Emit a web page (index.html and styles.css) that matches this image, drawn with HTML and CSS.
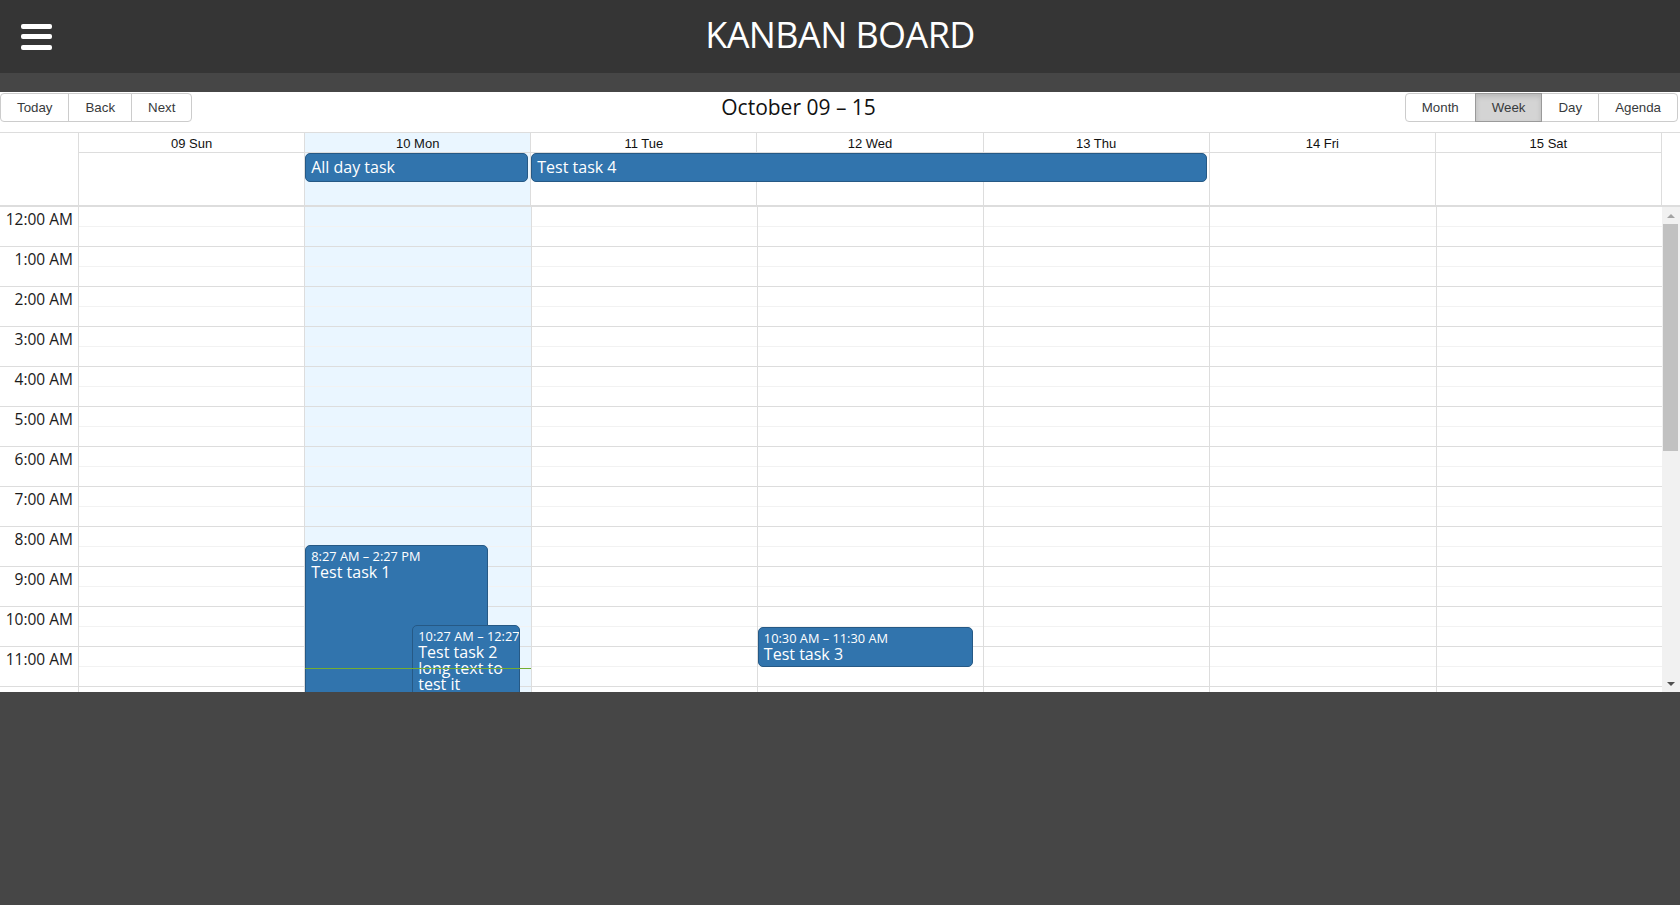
FILE: index.html
```html
<!DOCTYPE html>
<html lang="en">
<head>
<meta charset="utf-8">
<title>Kanban Board</title>
<link rel="stylesheet" href="styles.css">
</head>
<body>
<header class="topbar">
  <div class="burger" aria-label="Menu"><span></span><span></span><span></span></div>
  <h1 class="title">KANBAN BOARD</h1>
  <div></div>
</header>
<main class="page">
  <div class="cal">
    <div class="toolbar">
      <div class="btn-group">
        <button class="btn">Today</button><button class="btn">Back</button><button class="btn">Next</button>
      </div>
      <div class="tb-label">October 09 – 15</div>
      <div class="btn-group">
        <button class="btn">Month</button><button class="btn active">Week</button><button class="btn">Day</button><button class="btn">Agenda</button>
      </div>
    </div>
    <div class="timeview">
      <div class="thead">
        <div class="hgut"></div>
        <div class="hd">09 Sun</div>
        <div class="hd today">10 Mon</div>
        <div class="hd">11 Tue</div>
        <div class="hd">12 Wed</div>
        <div class="hd">13 Thu</div>
        <div class="hd">14 Fri</div>
        <div class="hd">15 Sat</div>
        <div class="ad c2"></div>
        <div class="ad c3 today"></div>
        <div class="ad c4"></div>
        <div class="ad c5"></div>
        <div class="ad c6"></div>
        <div class="ad c7"></div>
        <div class="ad c8"></div>
        <div class="ade" style="grid-column: 3 / 4">All day task</div>
        <div class="ade" style="grid-column: 4 / 7">Test task 4</div>
      </div>
      <div class="tcontent">
        <div class="tgrid">
          <div class="gutter">
            <div class="gg">12:00 AM</div><div class="gg">1:00 AM</div><div class="gg">2:00 AM</div><div class="gg">3:00 AM</div>
            <div class="gg">4:00 AM</div><div class="gg">5:00 AM</div><div class="gg">6:00 AM</div><div class="gg">7:00 AM</div>
            <div class="gg">8:00 AM</div><div class="gg">9:00 AM</div><div class="gg">10:00 AM</div><div class="gg">11:00 AM</div>
          </div>
          <div class="day">
            <div class="g"><i></i><i></i></div><div class="g"><i></i><i></i></div><div class="g"><i></i><i></i></div><div class="g"><i></i><i></i></div><div class="g"><i></i><i></i></div><div class="g"><i></i><i></i></div><div class="g"><i></i><i></i></div><div class="g"><i></i><i></i></div><div class="g"><i></i><i></i></div><div class="g"><i></i><i></i></div><div class="g"><i></i><i></i></div><div class="g"><i></i><i></i></div><div class="g"><i></i><i></i></div>
          </div>
          <div class="day today">
            <div class="g"><i></i><i></i></div><div class="g"><i></i><i></i></div><div class="g"><i></i><i></i></div><div class="g"><i></i><i></i></div><div class="g"><i></i><i></i></div><div class="g"><i></i><i></i></div><div class="g"><i></i><i></i></div><div class="g"><i></i><i></i></div><div class="g"><i></i><i></i></div><div class="g"><i></i><i></i></div><div class="g"><i></i><i></i></div><div class="g"><i></i><i></i></div><div class="g"><i></i><i></i></div>
            <div class="ev" style="top:338px;height:240px;left:0;width:81.2%">
              <div class="ev-label">8:27 AM – 2:27 PM</div>
              <div class="ev-title">Test task 1</div>
            </div>
            <div class="ev" style="top:418px;height:80px;left:47.5%;width:48%">
              <div class="ev-label">10:27 AM – 12:27 PM</div>
              <div class="ev-title">Test task 2 long text to test it</div>
            </div>
            <div class="now" style="top:461px"></div>
          </div>
          <div class="day">
            <div class="g"><i></i><i></i></div><div class="g"><i></i><i></i></div><div class="g"><i></i><i></i></div><div class="g"><i></i><i></i></div><div class="g"><i></i><i></i></div><div class="g"><i></i><i></i></div><div class="g"><i></i><i></i></div><div class="g"><i></i><i></i></div><div class="g"><i></i><i></i></div><div class="g"><i></i><i></i></div><div class="g"><i></i><i></i></div><div class="g"><i></i><i></i></div><div class="g"><i></i><i></i></div>
          </div>
          <div class="day">
            <div class="g"><i></i><i></i></div><div class="g"><i></i><i></i></div><div class="g"><i></i><i></i></div><div class="g"><i></i><i></i></div><div class="g"><i></i><i></i></div><div class="g"><i></i><i></i></div><div class="g"><i></i><i></i></div><div class="g"><i></i><i></i></div><div class="g"><i></i><i></i></div><div class="g"><i></i><i></i></div><div class="g"><i></i><i></i></div><div class="g"><i></i><i></i></div><div class="g"><i></i><i></i></div>
            <div class="ev" style="top:420px;height:40px;left:0;width:95.4%">
              <div class="ev-label">10:30 AM – 11:30 AM</div>
              <div class="ev-title">Test task 3</div>
            </div>
          </div>
          <div class="day">
            <div class="g"><i></i><i></i></div><div class="g"><i></i><i></i></div><div class="g"><i></i><i></i></div><div class="g"><i></i><i></i></div><div class="g"><i></i><i></i></div><div class="g"><i></i><i></i></div><div class="g"><i></i><i></i></div><div class="g"><i></i><i></i></div><div class="g"><i></i><i></i></div><div class="g"><i></i><i></i></div><div class="g"><i></i><i></i></div><div class="g"><i></i><i></i></div><div class="g"><i></i><i></i></div>
          </div>
          <div class="day">
            <div class="g"><i></i><i></i></div><div class="g"><i></i><i></i></div><div class="g"><i></i><i></i></div><div class="g"><i></i><i></i></div><div class="g"><i></i><i></i></div><div class="g"><i></i><i></i></div><div class="g"><i></i><i></i></div><div class="g"><i></i><i></i></div><div class="g"><i></i><i></i></div><div class="g"><i></i><i></i></div><div class="g"><i></i><i></i></div><div class="g"><i></i><i></i></div><div class="g"><i></i><i></i></div>
          </div>
          <div class="day">
            <div class="g"><i></i><i></i></div><div class="g"><i></i><i></i></div><div class="g"><i></i><i></i></div><div class="g"><i></i><i></i></div><div class="g"><i></i><i></i></div><div class="g"><i></i><i></i></div><div class="g"><i></i><i></i></div><div class="g"><i></i><i></i></div><div class="g"><i></i><i></i></div><div class="g"><i></i><i></i></div><div class="g"><i></i><i></i></div><div class="g"><i></i><i></i></div><div class="g"><i></i><i></i></div>
          </div>
        </div>
        <div class="sbar">
          <div class="sarrow"><span class="tri up"></span></div>
          <div class="sthumb"></div>
          <div class="sfill"></div>
          <div class="sarrow"><span class="tri down"></span></div>
        </div>
      </div>
    </div>
  </div>
</main>
</body>
</html>
```
FILE: styles.css
```css
* { box-sizing: border-box; }
html, body { margin: 0; padding: 0; }
body {
  background: #464646;
  font-family: "Open Sans", "Noto Sans", sans-serif;
  width: 1680px;
  height: 905px;
  overflow: hidden;
}

/* top bar */
.topbar {
  height: 73px;
  background: #353535;
  display: grid;
  grid-template-columns: 1fr auto 1fr;
  align-items: center;
  padding: 0 21px;
}
.burger {
  justify-self: start;
  display: flex;
  flex-direction: column;
  gap: 5.5px;
}
.burger span {
  display: block;
  width: 31px;
  height: 5px;
  background: #fff;
  border-radius: 2px;
}
.title {
  margin: 0 0 3px;
  color: #fff;
  font-size: 36px;
  font-weight: 400;
  letter-spacing: -0.6px;
  line-height: 1;
}

.page { padding-top: 19px; }

/* calendar */
.cal {
  background: #fff;
  height: 600px;
  display: flex;
  flex-direction: column;
}
.toolbar {
  display: flex;
  align-items: center;
  justify-content: space-between;
  margin: 1px 2px 10px 0;
}
.btn-group { display: flex; }
.btn {
  font-family: "Liberation Sans", Arial, sans-serif;
  font-size: 13.3px;
  line-height: 15px;
  color: #373a3c;
  background: #fff;
  border: 1px solid #ccc;
  padding: 6px 16px;
  margin: 0;
  border-radius: 0;
  cursor: pointer;
}
.btn + .btn { margin-left: -1px; }
.btn:first-child { border-radius: 4px 0 0 4px; }
.btn:last-child { border-radius: 0 4px 4px 0; }
.btn.active {
  background: #d4d4d4;
  border-color: #9a9a9a;
  box-shadow: inset 0 3px 5px rgba(0, 0, 0, 0.125);
  position: relative;
}
.tb-label {
  flex: 1;
  text-align: center;
  font-size: 21px;
  line-height: 27px;
  color: #111;
}

.timeview {
  flex: 1;
  min-height: 0;
  display: flex;
  flex-direction: column;
  border-top: 1px solid #ddd;
}
.thead {
  display: grid;
  grid-template-columns: 78px repeat(7, 1fr);
  grid-template-rows: 20px 52px;
  width: calc(100% - 18px);
  border-right: 1px solid #ddd;
}
.hgut { grid-row: 1 / 3; grid-column: 1; }
.hd {
  grid-row: 1;
  border-left: 1px solid #ddd;
  border-bottom: 1px solid #ddd;
  text-align: center;
  font-family: "Liberation Sans", Arial, sans-serif;
  font-size: 13px;
  line-height: 19px;
  padding-top: 1px;
  color: #111;
  white-space: nowrap;
  overflow: hidden;
}
.ad { grid-row: 2; border-left: 1px solid #ddd; }
.ad.c2 { grid-column: 2; }
.ad.c3 { grid-column: 3; }
.ad.c4 { grid-column: 4; }
.ad.c5 { grid-column: 5; }
.ad.c6 { grid-column: 6; }
.ad.c7 { grid-column: 7; }
.ad.c8 { grid-column: 8; }
.today { background: #eaf6ff; }
.ade {
  grid-row: 2;
  align-self: start;
  margin: 0 2px 0 1px;
  background: #3174ad;
  border: 1px solid #265985;
  border-radius: 5px;
  color: #fff;
  font-size: 16px;
  line-height: 23px;
  padding: 2px 5px;
  white-space: nowrap;
  overflow: hidden;
  position: relative;
  z-index: 1;
}

.tcontent {
  flex: 1;
  min-height: 0;
  display: flex;
  border-top: 2px solid #ddd;
  overflow: hidden;
}
.tgrid {
  flex: 1;
  display: grid;
  grid-template-columns: 78px repeat(7, 1fr);
  align-items: start;
  overflow: hidden;
}
.gutter, .day { display: flex; flex-direction: column; }
.gg {
  height: 40px;
  border-bottom: 1px solid #ddd;
  padding: 0 5px;
  text-align: right;
  font-size: 15.5px;
  line-height: 24px;
  color: #1a1a1a;
  white-space: nowrap;
}
.day {
  position: relative;
  border-left: 1px solid #ddd;
}
.g {
  height: 40px;
  border-bottom: 1px solid #ddd;
  display: flex;
  flex-direction: column;
}
.g i { flex: 1; display: block; }
.g i + i { border-top: 1px solid #f2f2f2; }

.ev {
  position: absolute;
  background: #3174ad;
  border: 1px solid #265985;
  border-radius: 5px;
  color: #fff;
  padding: 3px 5px 2px;
  overflow: hidden;
  z-index: 2;
}
.ev-label {
  font-size: 12.8px;
  line-height: 15px;
  white-space: nowrap;
}
.ev-title {
  font-size: 16px;
  line-height: 16px;
}
.now {
  position: absolute;
  left: 0;
  right: 0;
  height: 1px;
  background: #74ad31;
  z-index: 3;
}

/* scrollbar */
.sbar {
  width: 18px;
  background: #f1f1f1;
  display: flex;
  flex-direction: column;
}
.sarrow {
  height: 17px;
  display: flex;
  align-items: center;
  justify-content: center;
}
.tri {
  width: 0;
  height: 0;
  border-left: 4px solid transparent;
  border-right: 4px solid transparent;
}
.tri.up { border-bottom: 4px solid #a3a3a3; }
.tri.down { border-top: 4px solid #505050; }
.sthumb {
  height: 227px;
  margin: 0 2px 0 1px;
  background: #c1c1c1;
}
.sfill { flex: 1; }
```
